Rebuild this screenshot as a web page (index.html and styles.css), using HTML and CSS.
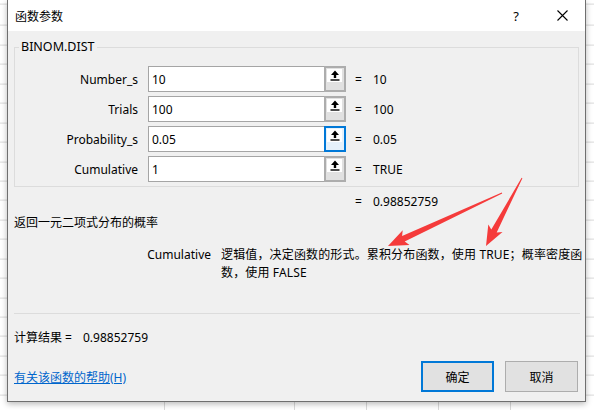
FILE: index.html
```html
<!DOCTYPE html>
<html lang="zh-CN">
<head>
<meta charset="utf-8">
<title>函数参数</title>
<link rel="stylesheet" href="styles.css">
</head>
<body>
<div class="dialog">
  <div class="titlebar">
    <span class="title">函数参数</span>
    <span class="tb-help">?</span>
    <span class="tb-close">
      <svg width="11" height="11" viewBox="0 0 11 11"><path d="M0.5 0.5 L10.5 10.5 M10.5 0.5 L0.5 10.5" stroke="#000" stroke-width="1.1" fill="none"/></svg>
    </span>
  </div>
  <div class="body">
    <fieldset class="group">
      <legend>BINOM.DIST</legend>
      <div class="row">
        <span class="lbl">Number_s</span>
        <span class="field"><span class="inp">10</span><span class="pick"><span class="sq"><svg width="10" height="11" viewBox="0 0 10 11"><path d="M5 0.5 L9 5 L6.2 5 L6.2 8 L3.8 8 L3.8 5 L1 5 Z" fill="#000"/><rect x="0.5" y="9.3" width="9" height="1.4" fill="#000"/></svg></span></span></span>
        <span class="eq">=</span><span class="val">10</span>
      </div>
      <div class="row">
        <span class="lbl">Trials</span>
        <span class="field"><span class="inp">100</span><span class="pick"><span class="sq"><svg width="10" height="11" viewBox="0 0 10 11"><path d="M5 0.5 L9 5 L6.2 5 L6.2 8 L3.8 8 L3.8 5 L1 5 Z" fill="#000"/><rect x="0.5" y="9.3" width="9" height="1.4" fill="#000"/></svg></span></span></span>
        <span class="eq">=</span><span class="val">100</span>
      </div>
      <div class="row">
        <span class="lbl">Probability_s</span>
        <span class="field"><span class="inp">0.05</span><span class="pick focus"><span class="sq"><svg width="10" height="11" viewBox="0 0 10 11"><path d="M5 0.5 L9 5 L6.2 5 L6.2 8 L3.8 8 L3.8 5 L1 5 Z" fill="#000"/><rect x="0.5" y="9.3" width="9" height="1.4" fill="#000"/></svg></span></span></span>
        <span class="eq">=</span><span class="val">0.05</span>
      </div>
      <div class="row">
        <span class="lbl">Cumulative</span>
        <span class="field"><span class="inp">1</span><span class="pick"><span class="sq"><svg width="10" height="11" viewBox="0 0 10 11"><path d="M5 0.5 L9 5 L6.2 5 L6.2 8 L3.8 8 L3.8 5 L1 5 Z" fill="#000"/><rect x="0.5" y="9.3" width="9" height="1.4" fill="#000"/></svg></span></span></span>
        <span class="eq">=</span><span class="val">TRUE</span>
      </div>
    </fieldset>
    <div class="result"><span class="eq">=</span><span class="val">0.98852759</span></div>
    <div class="summary">返回一元二项式分布的概率</div>
    <div class="argdesc">
      <span class="argname">Cumulative</span>
      <span class="argtext">逻辑值，决定函数的形式。累积分布函数，使用 TRUE；概率密度函数，使用 FALSE</span>
    </div>
    <div class="sep"></div>
    <div class="calc"><span class="calc-lbl">计算结果 =</span><span class="calc-val">0.98852759</span></div>
    <div class="footer">
      <a class="help" href="#">有关该函数的帮助(H)</a>
      <span class="btn primary">确定</span>
      <span class="btn">取消</span>
    </div>
  </div>
</div>
<svg class="annot" width="594" height="410" viewBox="0 0 594 410">
  <polygon fill="#f53b3b" points="502.2,193.4 404.7,241.5 409.5,244.9 388,246 402.7,230.3 402.1,236.1 501.8,192.6"/>
  <polygon fill="#f53b3b" points="522.4,178.2 496.7,232.4 502.5,232.1 486,246 488.3,224.6 491.3,229.6 521.6,177.8"/>
</svg>
</body>
</html>
```
FILE: styles.css
```css
html, body {
  margin: 0;
  padding: 0;
}
body {
  width: 594px;
  height: 410px;
  overflow: hidden;
  position: relative;
  font-family: "Noto Sans", "Noto Sans CJK SC", sans-serif;
  font-size: 12px;
  color: #000;
  background-color: #fff;
  background-image:
    repeating-linear-gradient(to bottom, transparent 0, transparent 18.44px, #d9d9d9 18.44px, #d9d9d9 19.44px),
    linear-gradient(to right, transparent 164px, #d9d9d9 164px, #d9d9d9 165px, transparent 165px, transparent 294px, #d9d9d9 294px, #d9d9d9 295px, transparent 295px, transparent 366px, #d9d9d9 366px, #d9d9d9 367px, transparent 367px, transparent 438px, #d9d9d9 438px, #d9d9d9 439px, transparent 439px, transparent 510px, #d9d9d9 510px, #d9d9d9 511px, transparent 511px);
  background-position: 0 6.6px, 0 0;
}
.dialog {
  box-sizing: border-box;
  margin-left: 7px;
  width: 579px;
  height: 402px;
  background: #f0f0f0;
  border: 1px solid #6f6f6f;
  border-top: none;
  box-shadow: 0 2px 6px rgba(0, 0, 0, 0.28);
  display: flex;
  flex-direction: column;
}
.titlebar {
  height: 31px;
  background: #fff;
  display: flex;
  align-items: center;
  padding-left: 7px;
}
.title {
  flex: 1;
  font-size: 12px;
}
.tb-help {
  font-size: 13px;
  width: 10px;
  text-align: center;
  margin-right: 36px;
}
.tb-close {
  display: flex;
  margin-right: 17px;
}
.body {
  flex: 1;
  padding: 0 5px 0 6px;
  display: flex;
  flex-direction: column;
}
.group {
  margin: 8px 1px 0 0;
  padding: 11px 0 4px 0;
  border: 1px solid #dcdcdc;
  min-width: 0;
}
.group legend {
  padding: 0 2px;
  margin-left: 4px;
  line-height: 16px;
  font-size: 12.5px;
}
.row {
  display: flex;
  align-items: center;
  height: 26px;
  margin-bottom: 4px;
}
.row:last-child {
  margin-bottom: 0;
}
.lbl {
  width: 123px;
  text-align: right;
  margin-right: 10px;
}
.field {
  display: flex;
  height: 26px;
}
.inp {
  box-sizing: border-box;
  width: 176px;
  height: 26px;
  background: #fff;
  border: 1px solid #a5a5a5;
  border-right: none;
  padding-left: 3px;
  display: flex;
  align-items: center;
}
.pick {
  box-sizing: border-box;
  width: 22px;
  height: 26px;
  background: #e1e1e1;
  border: 2px solid #adadad;
  padding: 1px;
}
.pick.focus {
  border-color: #0078d7;
  background: #e5f1fb;
}
.sq {
  display: flex;
  justify-content: center;
  align-items: center;
  width: 15px;
  height: 13px;
  background: #fff;
}
.eq {
  width: 7px;
  margin-left: 9px;
  text-align: center;
}
.val {
  margin-left: 11px;
}
.result {
  display: flex;
  margin-top: 7px;
  padding-left: 332px;
  line-height: 16px;
}
.summary {
  margin-top: 5px;
  line-height: 16px;
}
.argdesc {
  display: flex;
  margin-top: 15px;
  line-height: 18px;
}
.argname {
  width: 197px;
  text-align: right;
  margin-right: 10px;
  flex: none;
}
.argtext {
  flex: none;
  width: 364px;
  letter-spacing: 0.15px;
}
.sep {
  height: 1px;
  background: #dcdcdc;
  margin-top: 31px;
  margin-right: 0;
}
.calc {
  display: flex;
  margin-top: 16px;
  line-height: 16px;
}
.calc-val {
  margin-left: 11px;
}
.footer {
  display: flex;
  align-items: center;
  margin-top: 15px;
}
.help {
  flex: 1;
  color: #0066cc;
  text-decoration: underline;
}
.btn {
  box-sizing: border-box;
  width: 73px;
  height: 31px;
  background: #e1e1e1;
  border: 1px solid #adadad;
  display: flex;
  justify-content: center;
  align-items: center;
  margin-left: 11px;
}
.btn.primary {
  border: 2px solid #0078d7;
}
.footer .btn:last-child {
  margin-right: 2px;
}
.annot {
  position: absolute;
  left: 0;
  top: 0;
  pointer-events: none;
}
```
